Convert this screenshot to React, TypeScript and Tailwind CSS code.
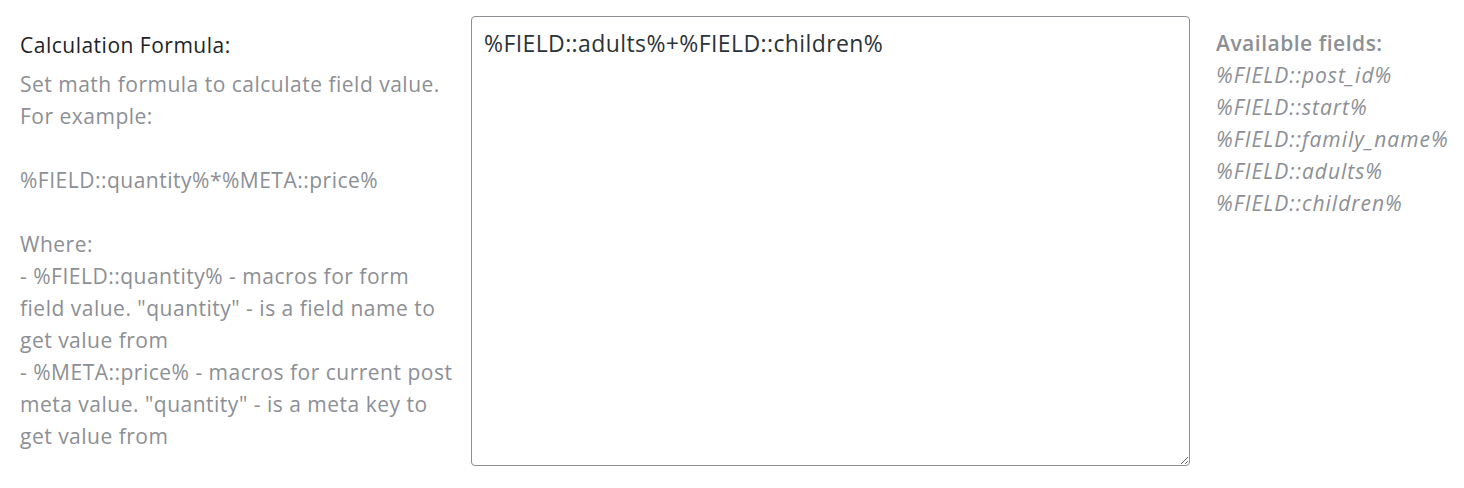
import React from "react";

const fields = [
  "%FIELD::post_id%",
  "%FIELD::start%",
  "%FIELD::family_name%",
  "%FIELD::adults%",
  "%FIELD::children%",
];

export default function App() {
  return (
    <div className="flex h-[488px] w-[1464px] bg-white pt-4 pl-5 font-['Open_Sans',Arial,sans-serif]">
      <div className="w-[436px] pt-[13px] text-[21px] leading-[32px] tracking-[0.5px]">
        <div className="mb-[7px] text-[#1d2327]">Calculation Formula:</div>
        <div className="text-[#8c8f94]">
          Set math formula to calculate field value.
          <br />
          For example:
          <br />
          <br />
          %FIELD::quantity%*%META::price%
          <br />
          <br />
          Where:
          <br />- %FIELD::quantity% - macros for form field value. "quantity" - is a field name to get value from
          <br />- %META::price% - macros for current post meta value. "quantity" - is a meta key to get value from
        </div>
      </div>
      <textarea
        className="ml-[15px] h-[450px] w-[719px] resize rounded border border-[#8c8f94] px-3 py-[10px] text-[23px] leading-[32px] tracking-[0.4px] text-[#2c3338] outline-none"
        defaultValue="%FIELD::adults%+%FIELD::children%"
      />
      <div className="ml-[26px] pt-[11px] text-[21px] leading-[32px] text-[#8c8f94]">
        <div className="font-semibold tracking-[0.5px]">Available fields:</div>
        {fields.map((f) => (
          <div key={f} className="italic tracking-[1px]">
            {f}
          </div>
        ))}
      </div>
    </div>
  );
}
